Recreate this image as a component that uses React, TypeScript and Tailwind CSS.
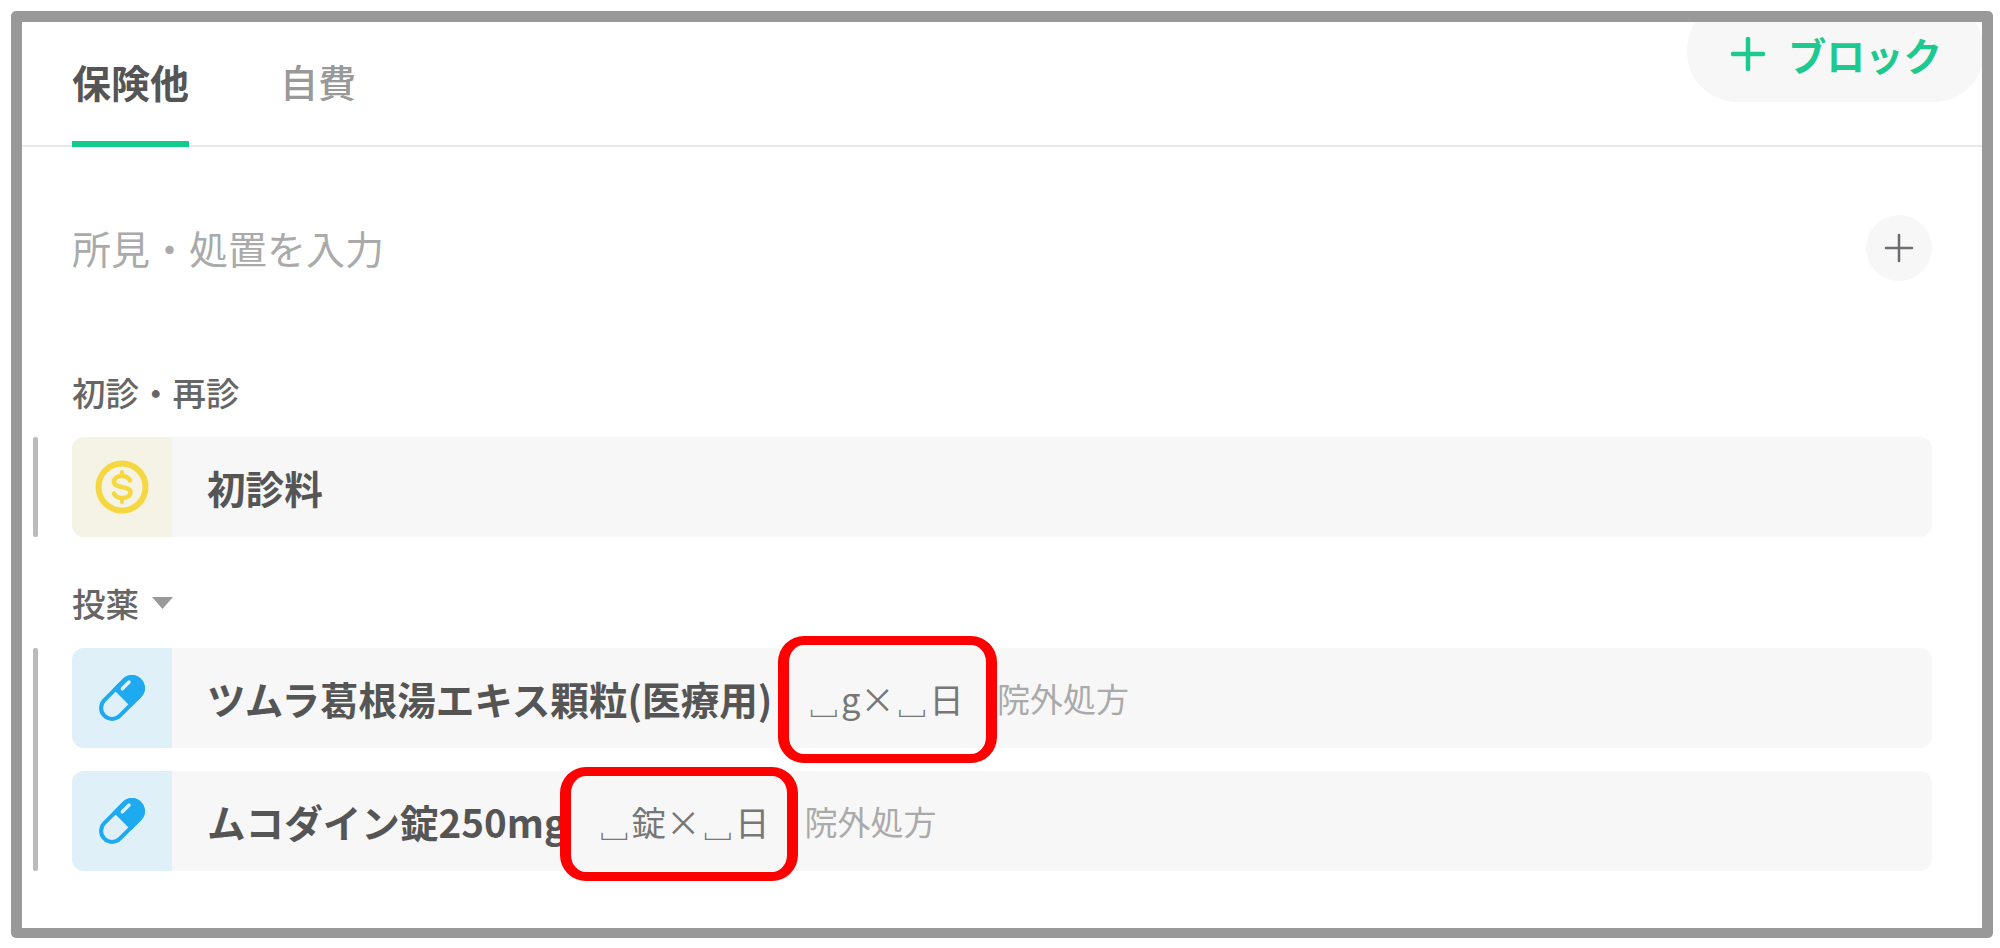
const font = "font-['Noto_Sans_CJK_JP','Noto_Sans',sans-serif]";

function Coin() {
  return (
    <svg width="54" height="54" viewBox="0 0 54 54" fill="none" stroke="#f5d742" strokeLinecap="round">
      <circle cx="27" cy="27" r="23.5" strokeWidth="6" />
      <path d="M35 20.5c-1.5-3-4.500-4.500-8-4.500c-4.500 0-8 2.200-8 5.700c0 7.300 16.500 3.500 16.500 10.600c0 3.700-3.700 5.700-8.500 5.700c-3.500 0-6.500-1.500-8-4.500" strokeWidth="4.500" />
      <path d="M27 12v4M27 38v4" strokeWidth="4" />
    </svg>
  );
}

function Pill() {
  return (
    <svg width="48" height="48" viewBox="0 0 48 48" fill="none">
      <g transform="rotate(-45 24 24)">
        <rect x="-1" y="13" width="50" height="22" rx="11" stroke="#1eaaf0" strokeWidth="4" />
        <path d="M24 11h14a13 13 0 0 1 0 26H24z" fill="#1eaaf0" />
        <rect x="29" y="16" width="13" height="3.500" rx="1.700" fill="#dff0f8" />
      </g>
    </svg>
  );
}

function Row({
  iconBg,
  icon,
  name,
  children,
}: {
  iconBg: string;
  icon: React.ReactNode;
  name: string;
  children?: React.ReactNode;
}) {
  return (
    <div className="flex h-[100px] items-center rounded-[12px] bg-[#f7f7f7]">
      <div className={`flex h-full w-[100px] shrink-0 items-center justify-center rounded-l-[12px] ${iconBg}`}>{icon}</div>
      <div className="ml-[35px] text-[38.600px] leading-[50px] font-bold whitespace-nowrap text-[#555555]">{name}</div>
      {children}
    </div>
  );
}

function Qty({ text, className, box }: { text: string; className: string; box: string }) {
  return (
    <span className={`relative -mt-[1px] text-[34.500px] leading-[50px] whitespace-nowrap text-[#777777] ${className}`}>
      {text}
      <span className={`absolute rounded-[26px] border-x-[11px] border-y-[9px] border-[#ff0000] ${box}`} />
    </span>
  );
}

export default function App() {
  return (
    <div className={`h-[948px] w-[2000px] bg-white p-[11px] ${font}`}>
      <div className="flex h-[927px] w-[1982px] flex-col overflow-hidden rounded-[5px] border-[11px] border-b-[10px] border-[#999999] bg-white">
        <header className="flex h-[125px] shrink-0 items-start justify-between border-b-2 border-[#e8e8e8] pl-[50px]">
          <div className="flex h-[125px] items-start gap-[91px]">
            <div className="h-[125px] w-[117px] border-b-[6px] border-[#12cc8e] pt-[34px] text-[39px] leading-[50px] font-bold whitespace-nowrap text-[#555555]">
              保険他
            </div>
            <div className="pt-[34px] text-[38px] leading-[50px] font-medium whitespace-nowrap text-[#999999]">自費</div>
          </div>
          <div className="-mt-[22px] -mr-[2px] flex h-[102px] w-[297px] shrink-0 items-center gap-[23px] rounded-[50px] bg-[#f7f7f7] pt-[6px] pl-[44px]">
            <svg width="34" height="34" viewBox="0 0 34 34" stroke="#1ec98f" strokeWidth="4.500" strokeLinecap="round">
              <path d="M17 2v30M2 17h30" />
            </svg>
            <span className="text-[38.500px] leading-[50px] font-bold whitespace-nowrap text-[#1ec98f]">ブロック</span>
          </div>
        </header>

        <main className="flex flex-col px-[50px] pt-[68px]">
          <div className="flex h-[66px] items-center justify-between">
            <span className="-mt-[2px] text-[39px] leading-[50px] text-[#aaaaaa]">所見・処置を入力</span>
            <div className="flex size-[66px] items-center justify-center rounded-full bg-[#f7f7f7]">
              <svg width="30" height="30" viewBox="0 0 30 30" stroke="#6b6b70" strokeWidth="2.500" strokeLinecap="round">
                <path d="M15 2v26M2 15h26" />
              </svg>
            </div>
          </div>

          <div className="mt-[91px] mb-[2px] h-[40px] text-[33.500px] leading-[40px] font-medium whitespace-nowrap text-[#666666]">
            初診・再診
          </div>
          <div className="mt-[23px] -ml-[39px] flex gap-[34px]">
            <div className="w-[5px] rounded-[2px] bg-[#bbbbbb]" />
            <div className="min-w-0 flex-1">
              <Row iconBg="bg-[#f5f3e5]" icon={<Coin />} name="初診料" />
            </div>
          </div>

          <div className="mt-[46px] mb-[2px] flex h-[40px] items-center gap-[13px] text-[33.500px] leading-[40px] font-medium text-[#666666]">
            <span>投薬</span>
            <svg width="21" height="12" viewBox="0 0 21 12" fill="#999999">
              <path d="M0 0h21l-10.500 12z" />
            </svg>
          </div>
          <div className="mt-[23px] -ml-[39px] flex gap-[34px]">
            <div className="w-[5px] rounded-[2px] bg-[#bbbbbb]" />
            <div className="flex min-w-0 flex-1 flex-col gap-[23px]">
              <Row iconBg="bg-[#dff0f8]" icon={<Pill />} name="ツムラ葛根湯エキス顆粒(医療用)">
                <Qty text="␣g×␣日" className="ml-[34px]" box="-top-[37px] -right-[33px] -bottom-[40px] -left-[28px]" />
                <span className="ml-[33px] text-[33px] leading-[50px] whitespace-nowrap text-[#aaaaaa]">院外処方</span>
              </Row>
              <Row iconBg="bg-[#dff0f8]" icon={<Pill />} name="ムコダイン錠250mg">
                <Qty text="␣錠×␣日" className="ml-[30px]" box="-top-[29px] -right-[29px] -bottom-[35px] -left-[37px]" />
                <span className="ml-[35px] text-[33px] leading-[50px] whitespace-nowrap text-[#aaaaaa]">院外処方</span>
              </Row>
            </div>
          </div>
        </main>
      </div>
    </div>
  );
}
